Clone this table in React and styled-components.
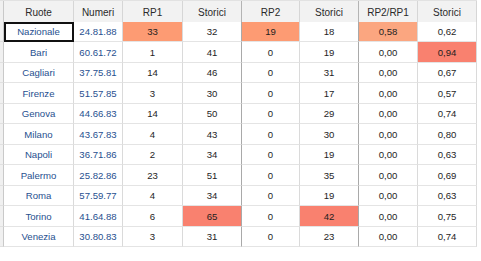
import React from "react";
import styled, { createGlobalStyle } from "styled-components";

const GlobalStyle = createGlobalStyle`
  * { box-sizing: border-box; }
  html, body, #root { margin: 0; padding: 0; background: #fff; }
  body { font-family: "Liberation Sans", Arial, sans-serif; }
`;

const Grid = styled.div`
  display: grid;
  grid-template-columns: 4px 70px 49px 60px 59px 58px 59px 59px 59px;
  grid-auto-rows: 20.5px;
  width: 477px;
  border-top: 1px solid #e2e2e2;
  font-size: 9.6px;
`;

const Corner = styled.div`
  background: #f0f0f0;
  border-right: 1px solid #c9c9c9;
  border-bottom: 1px solid #e0e0e0;
  height: ${(p) => (p.$head ? "24px" : "auto")};
`;

const Head = styled.div`
  height: 24px;
  display: flex;
  align-items: center;
  justify-content: center;
  background: #f2f2f2;
  color: #2a2a2a;
  font-size: 10px;
  border-right: 1px solid ${(p) => (p.$group ? "#b4b4b4" : "#d6d6d6")};
  border-bottom: 1px solid #cfcfcf;
`;

const Cell = styled.div`
  display: flex;
  align-items: center;
  justify-content: center;
  padding-top: 1px;
  color: ${(p) => (p.$blue ? "#27508f" : "#1e1e1e")};
  background: ${(p) => p.$bg || "#fff"};
  border-right: 1px solid ${(p) => (p.$group ? "#a9a9a9" : "#dadada")};
  border-bottom: 1px solid #e4e4e4;
  outline: ${(p) => (p.$focus ? "2px solid #111" : "none")};
  outline-offset: -2px;
`;

const ORANGE = "#fd9b73";
const LIGHT = "#fba680";
const RED = "#f9816f";

const heads = ["Ruote", "Numeri", "RP1", "Storici", "RP2", "Storici", "RP2/RP1", "Storici"];
const groupCols = [3, 5];

const rows = [
  ["Nazionale", "24.81.88", "33", "32", "19", "18", "0,58", "0,62"],
  ["Bari", "60.61.72", "1", "41", "0", "19", "0,00", "0,94"],
  ["Cagliari", "37.75.81", "14", "46", "0", "31", "0,00", "0,67"],
  ["Firenze", "51.57.85", "3", "30", "0", "17", "0,00", "0,57"],
  ["Genova", "44.66.83", "14", "50", "0", "29", "0,00", "0,74"],
  ["Milano", "43.67.83", "4", "43", "0", "30", "0,00", "0,80"],
  ["Napoli", "36.71.86", "2", "34", "0", "19", "0,00", "0,63"],
  ["Palermo", "25.82.86", "23", "51", "0", "35", "0,00", "0,69"],
  ["Roma", "57.59.77", "4", "34", "0", "19", "0,00", "0,63"],
  ["Torino", "41.64.88", "6", "65", "0", "42", "0,00", "0,75"],
  ["Venezia", "30.80.83", "3", "31", "0", "23", "0,00", "0,74"],
];

const highlights = {
  "0-2": ORANGE,
  "0-4": ORANGE,
  "0-6": LIGHT,
  "1-7": RED,
  "9-3": RED,
  "9-5": RED,
};

export default function App() {
  return (
    <>
      <GlobalStyle />
      <Grid>
        <Corner $head />
        {heads.map((h, i) => (
          <Head key={i} $group={groupCols.includes(i)}>
            {h}
          </Head>
        ))}
        {rows.map((r, ri) => (
          <React.Fragment key={ri}>
            <Corner />
            {r.map((v, ci) => (
              <Cell
                key={ci}
                $blue={ci < 2}
                $group={groupCols.includes(ci)}
                $bg={highlights[`${ri}-${ci}`]}
                $focus={ri === 0 && ci === 0}
              >
                {v}
              </Cell>
            ))}
          </React.Fragment>
        ))}
      </Grid>
    </>
  );
}
